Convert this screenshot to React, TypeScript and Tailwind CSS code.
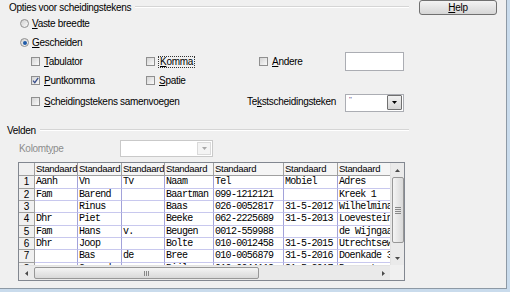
import type { ReactNode } from "react"

const rows = [
  ["1", "Aanh", "Vn", "Tv", "Naam", "Tel", "Mobiel", "Adres"],
  ["2", "Fam", "Barend", "", "Baartman", "099-1212121", "", "Kreek 1"],
  ["3", "", "Rinus", "", "Baas", "026-0052817", "31-5-2012", "Wilhelmina"],
  ["4", "Dhr", "Piet", "", "Beeke", "062-2225689", "31-5-2013", "Loevestein"],
  ["5", "Fam", "Hans", "v.", "Beugen", "0012-559988", "", "de Wijngaard"],
  ["6", "Dhr", "Joop", "", "Bolte", "010-0012458", "31-5-2015", "Utrechtseweg"],
  ["7", "", "Bas", "de", "Bree", "010-0056879", "31-5-2016", "Doenkade 3"],
  ["8", "", "Gerard", "", "Bijl", "010-0044112", "31-5-2017", "Dorpsstraat"],
]

function Check({ checked = false }: { checked?: boolean }) {
  return (
    <span className="relative w-[9px] h-[9px] shrink-0 border border-[#8f8f8f] bg-linear-to-br from-[#d4d4d4] to-[#fafafa]">
      {checked && (
        <svg width="9" height="9" viewBox="0 0 9 9" className="absolute -top-[1px] -left-[1px]">
          <path d="M2 4.6 L3.8 6.6 L7.2 1.8" stroke="#3a4f8c" strokeWidth="1.3" fill="none" />
        </svg>
      )}
    </span>
  )
}

function Radio({ checked = false }: { checked?: boolean }) {
  return (
    <span className="w-[9px] h-[9px] shrink-0 rounded-full border border-[#8f8f8f] bg-linear-to-br from-[#d0d0d0] to-[#fbfbfb] flex items-center justify-center">
      {checked && <span className="w-[4px] h-[4px] rounded-full bg-[#1f5ba8]" />}
    </span>
  )
}

function GroupTitle({ label, pad }: { label: string; pad: string }) {
  return (
    <div className={`h-[14px] flex items-center ${pad}`}>
      <span>{label}</span>
      <div className="flex-1 ml-[4px] mr-[1px] h-[2px] border-t border-[#d5d5d5] border-b border-b-white" />
    </div>
  )
}

function Opt({ children }: { children: ReactNode }) {
  return <span className="ml-[4px] whitespace-nowrap">{children}</span>
}

function Arrow({ dir, color = "#4a4a4a" }: { dir: "up" | "down" | "left" | "right"; color?: string }) {
  const d = {
    up: "M1 4 L3.5 1 L6 4 Z",
    down: "M1 1 L6 1 L3.5 4 Z",
    left: "M4 1 L4 6 L1 3.5 Z",
    right: "M1 1 L1 6 L4 3.5 Z",
  }[dir]
  const vert = dir === "up" || dir === "down"
  return (
    <svg width={vert ? 7 : 5} height={vert ? 5 : 7} viewBox={vert ? "0 0 7 5" : "0 0 5 7"}>
      <path d={d} fill={color} />
    </svg>
  )
}

export default function App() {
  return (
    <div className="w-[510px] h-[292px] bg-[#c9dbec] overflow-hidden font-['Liberation_Sans',Arial,sans-serif] text-[10px] tracking-[-0.3px] text-black">
      <div className="w-[507px] h-[289px] bg-[#f0f0f0] border-r border-b border-[#8d99a5] flex">
        {/* left part */}
        <div className="w-[410px] flex flex-col">
          <GroupTitle label="Opties voor scheidingstekens" pad="pl-[9px]" />

          <div className="h-[19px] pl-[20px] flex items-center">
            <Radio />
            <span className="ml-[3px]"><u>V</u>aste breedte</span>
          </div>
          <div className="h-[19px] pl-[20px] flex items-center">
            <Radio checked />
            <span className="ml-[3px]"><u>G</u>escheiden</span>
          </div>

          <div className="h-[19px] pl-[31px] flex items-center">
            <div className="w-[115px] flex items-center">
              <Check />
              <Opt><u>T</u>abulator</Opt>
            </div>
            <div className="w-[113px] flex items-center">
              <Check />
              <span className="ml-[3px] px-[1px] border border-dotted border-[#333] leading-[10px]"><u>K</u>omma</span>
            </div>
            <div className="w-[86px] flex items-center">
              <Check />
              <Opt><u>A</u>ndere</Opt>
            </div>
            <div className="w-[59px] h-[19px] bg-white border border-[#abadb3]" />
          </div>

          <div className="h-[19px] pl-[31px] flex items-center">
            <div className="w-[115px] flex items-center">
              <Check checked />
              <Opt><u>P</u>untkomma</Opt>
            </div>
            <div className="w-[113px] flex items-center">
              <Check />
              <Opt><u>S</u>patie</Opt>
            </div>
          </div>

          <div className="h-[22px] pl-[31px] flex items-center">
            <div className="w-[216px] flex items-center">
              <Check />
              <Opt><u>S</u>cheidingstekens samenvoegen</Opt>
            </div>
            <div className="w-[98px] whitespace-nowrap">Te<u>k</u>stscheidingsteken</div>
            <div className="w-[59px] h-[18px] mt-[3px] bg-white border border-[#abadb3] flex items-center">
              <span className="flex-1 pl-[3px] -mt-[5px] text-[8px] text-[#6a4a8a]">"</span>
              <div className="w-[15px] h-[15px] mr-[1px] border border-[#707070] rounded-[1px] bg-linear-to-b from-[#f2f2f2] to-[#d4d4d4] flex items-center justify-center">
                <Arrow dir="down" color="#000" />
              </div>
            </div>
          </div>

          <div className="mt-[11px]">
            <GroupTitle label="Velden" pad="pl-[7px]" />
          </div>

          <div className="h-[18px] mt-[2px] pl-[19px] flex items-center">
            <span className="w-[101px] text-[#8d8d8d]">Kolomt<u>y</u>pe</span>
            <div className="w-[93px] h-[17px] bg-white border border-[#c9c9c9] flex items-center justify-end">
              <div className="w-[14px] h-[13px] mr-[1px] border border-[#dadada] bg-[#f4f4f4] flex items-center justify-center">
                <Arrow dir="down" color="#a8a8a8" />
              </div>
            </div>
          </div>

          {/* table */}
          <div className="ml-[18px] mt-[5px] w-[387px] h-[119px] border border-[#828790] bg-white flex flex-col">
            <div className="h-[102px] flex">
              <div className="w-[371px] overflow-hidden grid grid-cols-[16px_43px_44px_43px_49px_70px_54px_60px] grid-rows-[13px_13px_12px_12px_13px_12px_12px_13px_13px]">
                <div className="bg-[#f0f0f0] border-r border-b border-[#a0a0a0]" />
                {["Standaard", "Standaard", "Standaard", "Standaard", "Standaard", "Standaard", "Standaard"].map((h, i) => (
                  <div key={i} className="bg-[#f5f5f5] border-r border-b border-[#a0a0a0] pl-[1px] text-[9.5px] leading-[12px] whitespace-nowrap overflow-hidden">
                    {h}
                  </div>
                ))}
                {rows.map((r) =>
                  r.map((c, j) =>
                    j === 0 ? (
                      <div key={r[0] + "-0"} className="bg-[#f0f0f0] border-r border-b border-[#a0a0a0] text-center leading-[12px] tracking-normal">
                        {c}
                      </div>
                    ) : (
                      <div key={r[0] + "-" + j} className="bg-white border-r border-r-[#a2a2da] border-b border-b-[#c8c8ee] pl-[1px] font-['Liberation_Mono',monospace] text-[10px] tracking-[-0.7px] leading-[12px] whitespace-nowrap overflow-hidden">
                        {c}
                      </div>
                    )
                  )
                )}
              </div>
              {/* vertical scrollbar */}
              <div className="w-[14px] bg-[#eaeaea] border-l border-[#e2e2e2] flex flex-col items-center">
                <div className="h-[14px] flex items-center justify-center"><Arrow dir="up" /></div>
                <div className="w-[12px] h-[66px] rounded-[2px] border border-[#979797] bg-linear-to-r from-[#f4f4f4] to-[#d9d9d9] flex flex-col items-center justify-center gap-[1px]">
                  <span className="w-[6px] h-[1px] bg-[#888]" />
                  <span className="w-[6px] h-[1px] bg-[#888]" />
                  <span className="w-[6px] h-[1px] bg-[#888]" />
                  <span className="w-[6px] h-[1px] bg-[#888]" />
                </div>
                <div className="flex-1" />
                <div className="h-[14px] flex items-center justify-center"><Arrow dir="down" /></div>
              </div>
            </div>
            {/* horizontal scrollbar */}
            <div className="flex-1 flex">
              <div className="w-[371px] bg-[#eaeaea] border-t border-[#e2e2e2] flex items-center">
                <div className="w-[15px] flex items-center justify-center"><Arrow dir="left" /></div>
                <div className="w-[225px] h-[12px] rounded-[2px] border border-[#979797] bg-linear-to-b from-[#f4f4f4] to-[#d9d9d9] flex items-center justify-center gap-[1px]">
                  <span className="w-[1px] h-[5px] bg-[#888]" />
                  <span className="w-[1px] h-[5px] bg-[#888]" />
                  <span className="w-[1px] h-[5px] bg-[#888]" />
                </div>
                <div className="flex-1" />
                <div className="w-[14px] flex items-center justify-center"><Arrow dir="right" /></div>
              </div>
              <div className="flex-1 bg-[#f0f0f0]" />
            </div>
          </div>
        </div>

        {/* right part */}
        <div className="flex-1 pl-[9px]">
          <button className="w-[78px] h-[15px] -mt-[2px] rounded-[3px] border border-[#707070] bg-linear-to-b from-[#f3f3f3] to-[#d6d6d6] text-[10px] leading-[12px] pt-[1px]">
            <u>H</u>elp
          </button>
        </div>
      </div>
    </div>
  )
}
